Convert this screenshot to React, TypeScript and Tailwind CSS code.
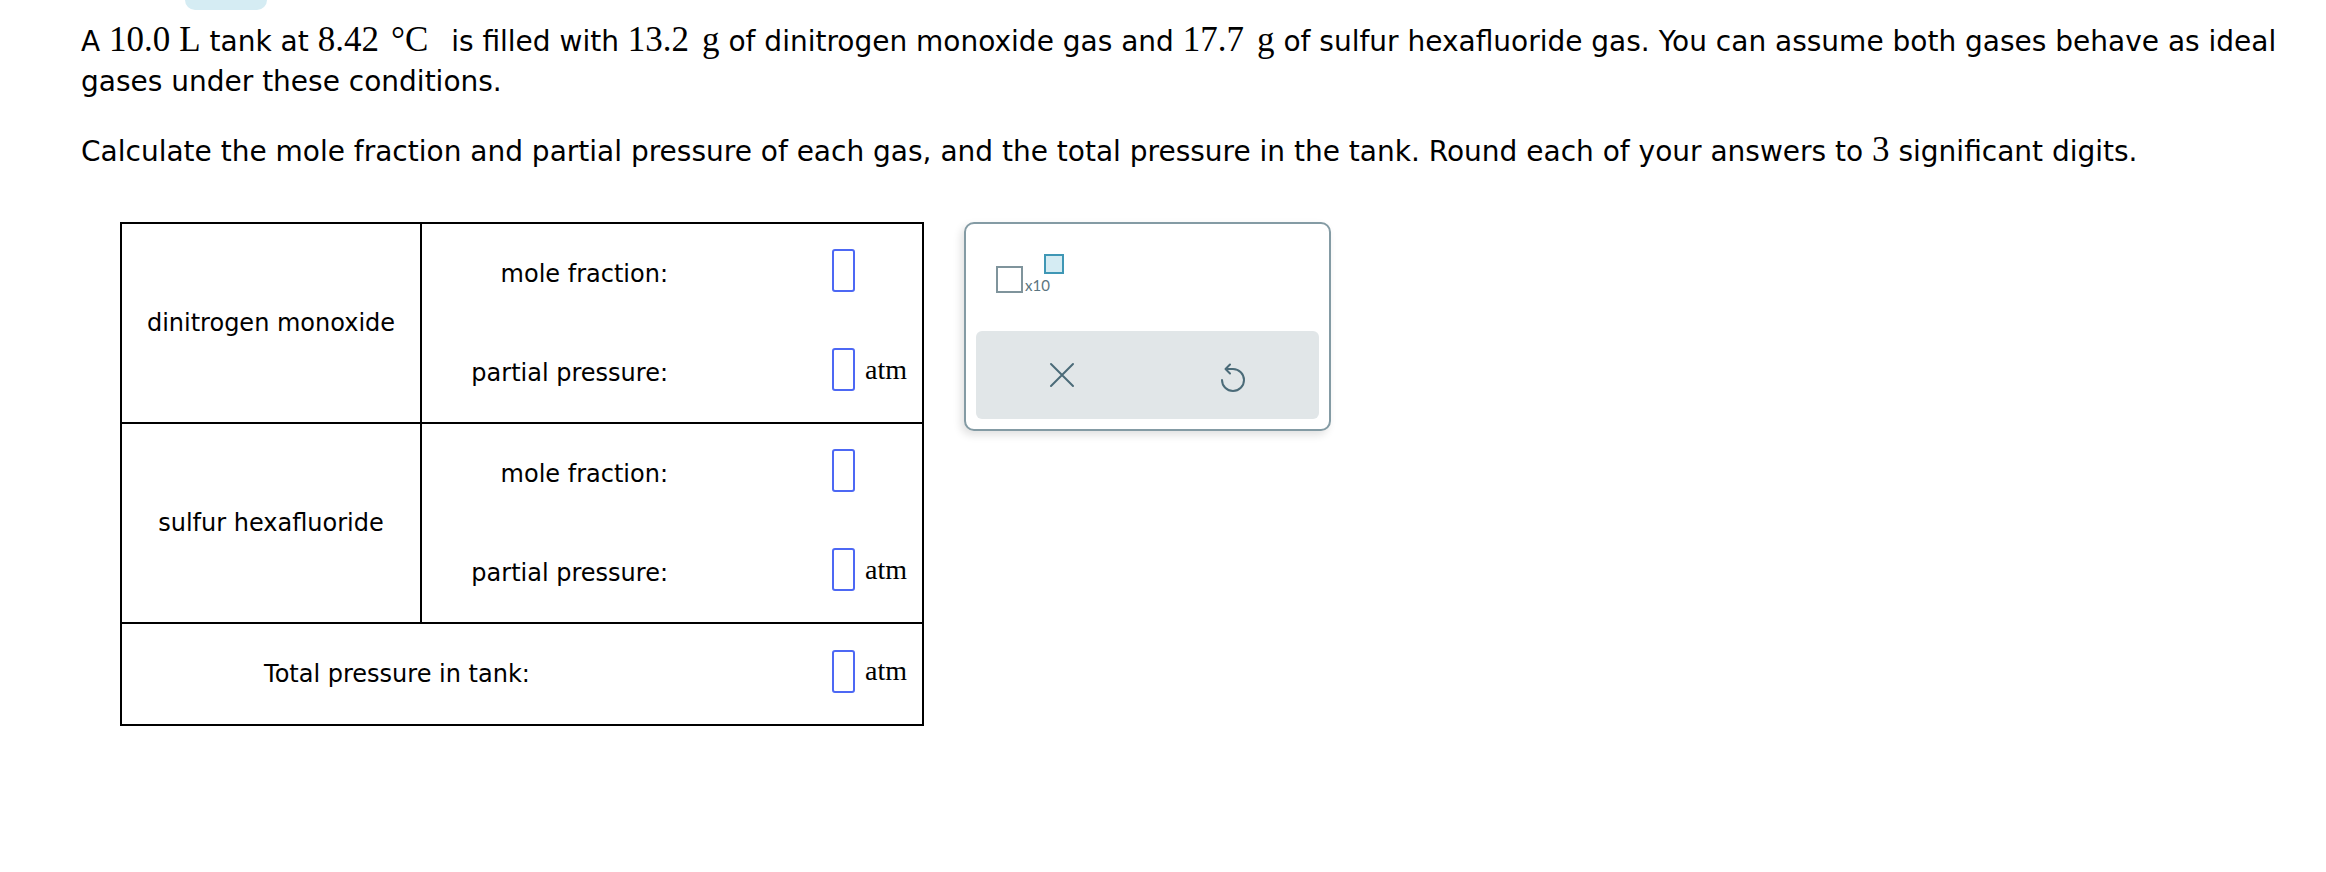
import React from 'react';

// quantity with unit, typeset in serif like the math renderer
const Q: React.FC<{ v: string; u?: string; gap?: string; after?: string }> = ({ v, u, gap = 'ml-[13px]', after = '' }) => (
  <span className={`font-['Liberation_Serif',serif] text-[35px] leading-none ${after}`}>
    {v}
    {u && <span className={gap}>{u}</span>}
  </span>
);

const AnswerBox: React.FC<{ unit?: boolean }> = ({ unit }) => (
  <div className="flex items-center mb-[6px]">
    <span className="block w-[23px] h-[43px] border-2 border-[#4d68f4] rounded-[3px] bg-white" />
    {unit && (
      <span className="ml-[10px] font-['Liberation_Serif',serif] text-[28px] leading-none">atm</span>
    )}
  </div>
);

const GasRow: React.FC<{ name: string }> = ({ name }) => (
  <div className="flex h-[200px] border-b-2 border-black">
    <div className="w-[300px] border-r-2 border-black flex items-center justify-center">{name}</div>
    <div className="flex-1 flex flex-col">
      <div className="flex-1 flex items-center">
        <div className="w-[250px] text-right pr-1">mole fraction:</div>
        <div className="pl-[160px]">
          <AnswerBox />
        </div>
      </div>
      <div className="flex-1 flex items-center">
        <div className="w-[250px] text-right pr-1">partial pressure:</div>
        <div className="pl-[160px]">
          <AnswerBox unit />
        </div>
      </div>
    </div>
  </div>
);

export default function App() {
  return (
    <div className="w-[2326px] h-[872px] bg-white text-black font-['DejaVu_Sans',sans-serif]">
      <div className="ml-[185px] w-[82px] h-[10px] bg-[#d5ecf3] rounded-b-[12px]" />

      <div className="pl-[81px] mt-[12px] text-[28px] leading-[40px]">
        <p>
          A <Q v="10.0" u="L" gap="ml-[9px]" /> tank at <Q v="8.42" u="°C" gap="ml-[12px]" after="mr-[14px]" /> is
          filled with <Q v="13.2" u="g" /> of dinitrogen monoxide gas and <Q v="17.7" u="g" /> of sulfur
          hexafluoride gas. You can assume both gases behave as ideal
          <br />
          gases under these conditions.
        </p>
        <p className="mt-[30px]">
          Calculate the mole fraction and partial pressure of each gas, and the total pressure in the tank.
          Round each of your answers to <Q v="3" /> significant digits.
        </p>
      </div>

      <div className="flex items-start mt-[50px] pl-[120px] gap-[40px]">
        {/* answer table */}
        <div className="w-[804px] border-2 border-black text-[24px]">
          <GasRow name="dinitrogen monoxide" />
          <GasRow name="sulfur hexafluoride" />
          <div className="flex h-[100px] items-center">
            <div className="w-[550px] text-center">Total pressure in tank:</div>
            <div className="pl-[160px]">
              <AnswerBox unit />
            </div>
          </div>
        </div>

        {/* tools panel */}
        <div className="w-[367px] h-[209px] border-2 border-[#849ba4] rounded-[10px] bg-white shadow-[-3px_4px_8px_rgba(0,0,0,0.12)] p-[10px] flex flex-col">
          <div className="flex-1 pl-[20px] pt-[32px] font-['Lato',sans-serif]">
            <div className="flex items-start">
              <span className="block w-[27px] h-[27px] border-2 border-[#7f949c]" />
              <span className="mt-[12px] ml-[2px] text-[15px] leading-none text-[#5b7580]">x10</span>
              <span className="block -ml-[6px] -mt-[12px] w-[20px] h-[20px] border-2 border-[#3f97b5] bg-[#d5ecf3]" />
            </div>
          </div>
          <div className="h-[88px] bg-[#e1e6e8] rounded-[6px] grid grid-cols-2 items-center justify-items-center">
            <svg width="26" height="26" viewBox="0 0 26 26" fill="none" stroke="#4b6b78" strokeWidth="2" strokeLinecap="round">
              <path d="M2 2 24 24M24 2 2 24" />
            </svg>
            <svg width="32" height="40" viewBox="0 0 32 40" fill="none" stroke="#4b6b78" strokeWidth="2" strokeLinecap="round" strokeLinejoin="round">
              <path d="M5 25a11 11 0 1 0 11-11H10" />
              <path d="M13 9.5 8.5 14l4.5 4.5" />
            </svg>
          </div>
        </div>
      </div>
    </div>
  );
}
